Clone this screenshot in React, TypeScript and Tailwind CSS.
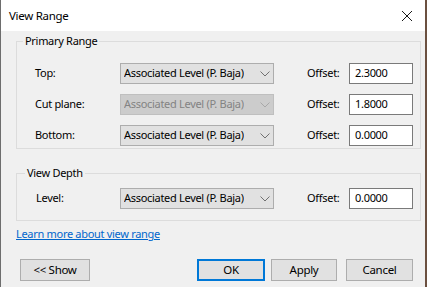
const font = { fontFamily: '"Noto Sans", "Segoe UI", sans-serif' };

function Chevron({ disabled }: { disabled?: boolean }) {
  return (
    <svg width="10" height="6" viewBox="0 0 10 6" className="shrink-0">
      <path d="M0.5 0.5L5 5L9.5 0.5" stroke={disabled ? "#a8a8a8" : "#707070"} strokeWidth="1" fill="none" />
    </svg>
  );
}

function Combo({ disabled = false }: { disabled?: boolean }) {
  return (
    <div
      className={
        "flex h-[21px] w-[154px] items-center justify-between border pl-[3px] pr-[3px] " +
        (disabled ? "border-[#bfbfbf] bg-[#cccccc] text-[#838383]" : "border-[#adadad] bg-[#e1e1e1] text-black")
      }
    >
      <span className="overflow-hidden whitespace-nowrap">Associated Level (P. Baja)</span>
      <Chevron disabled={disabled} />
    </div>
  );
}

function Row({ label, value, disabled }: { label: string; value: string; disabled?: boolean }) {
  return (
    <div className="flex h-[21px] items-center">
      <span className="w-[85px]">{label}</span>
      <Combo disabled={disabled} />
      <span className="ml-[33px] w-[42px]">Offset:</span>
      <div className="flex h-[21px] w-[64px] items-center border border-[#7a7a7a] bg-white pl-[5px]">{value}</div>
    </div>
  );
}

function Button({ children, primary = false, w }: { children: string; primary?: boolean; w: string }) {
  return (
    <button
      className={
        "flex h-[22px] items-center justify-center bg-[#e1e1e1] text-[11.5px] " +
        w +
        (primary ? " border-2 border-[#0078d7]" : " border border-[#adadad]")
      }
    >
      {children}
    </button>
  );
}

export default function App() {
  return (
    <div
      className="flex h-[287px] w-[427px] flex-col border-l border-l-[#6d6d6d] border-r-2 border-r-[#6b5040] bg-[#f0f0f0] text-[11px] tracking-[-0.3px] text-black"
      style={font}
    >
      {/* Title bar */}
      <div className="flex h-[31px] items-center justify-between bg-white pl-[8px] pr-[8px]">
        <span className="text-[11.5px]">View Range</span>
        <svg width="12" height="12" viewBox="0 0 12 12" className="mr-[4px]">
          <path d="M1 1L11 11M11 1L1 11" stroke="#1a1a1a" strokeWidth="1" fill="none" />
        </svg>
      </div>

      <div className="flex flex-1 flex-col pl-[15px] pr-[4px]">
        {/* Primary Range */}
        <fieldset className="mt-[2px] border border-[#dcdcdc] pb-[2px] pl-[18px] pr-[7px]">
          <legend className="-ml-[12px] px-[2px] leading-[16px]">Primary Range</legend>
          <div className="flex flex-col gap-[10px] pt-[14px]">
            <Row label="Top:" value="2.3000" />
            <Row label="Cut plane:" value="1.8000" disabled />
            <Row label="Bottom:" value="0.0000" />
          </div>
        </fieldset>

        {/* View Depth */}
        <fieldset className="mt-[16px] border border-[#dcdcdc] pb-[11px] pl-[19px] pr-[7px]">
          <legend className="-ml-[11px] px-[2px] leading-[16px]">View Depth</legend>
          <div className="pt-[7px]">
            <div className="flex h-[21px] items-center">
              <span className="w-[84px]">Level:</span>
              <Combo />
              <span className="ml-[33px] w-[42px]">Offset:</span>
              <div className="flex h-[21px] w-[64px] items-center border border-[#7a7a7a] bg-white pl-[5px]">0.0000</div>
            </div>
          </div>
        </fieldset>

        <a className="mt-[5px] leading-[16px] text-[#0066cc] underline">Learn more about view range</a>

        {/* Buttons */}
        <div className="mt-[17px] flex items-center pl-[4px]">
          <Button w="w-[70px]">{"<< Show"}</Button>
          <div className="flex-1" />
          <Button primary w="w-[68px]">OK</Button>
          <div className="w-[6px]" />
          <Button w="w-[66px]">Apply</Button>
          <div className="w-[9px]" />
          <Button w="w-[67px]">Cancel</Button>
          <div className="w-[8px]" />
        </div>
      </div>
    </div>
  );
}
